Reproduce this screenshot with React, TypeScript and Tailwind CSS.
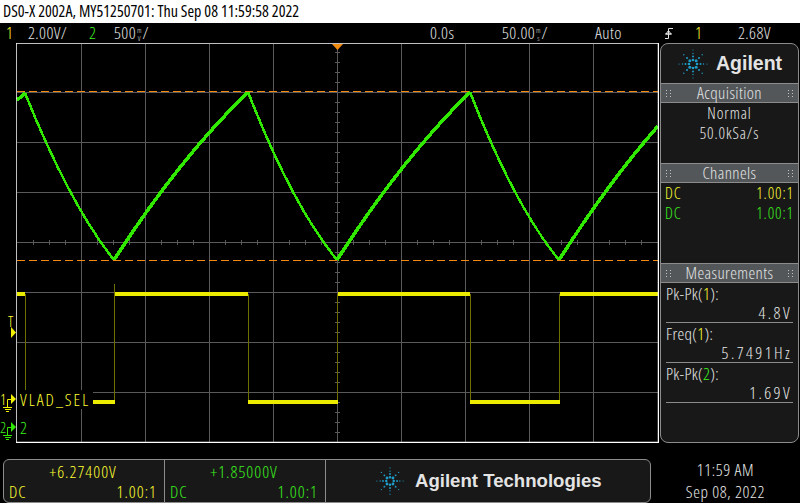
const hLines = [92, 142, 192, 242, 292, 342, 392]
const vLines = [81, 145, 209, 273, 337, 401, 465, 529, 593]

const xTicks = Array.from({ length: 39 }, (_, i) => 33 + i * 16)
const yTicks = Array.from({ length: 39 }, (_, i) => 52 + i * 10)

const sparkArms = [0, 45, 90, 135, 180, 225, 270, 315]

const Spark = ({ size = 32 }: { size?: number }) => (
  <svg width={size} height={size} viewBox="-16 -16 32 32" className="shrink-0">
    {sparkArms.map((deg) => {
      const straight = deg % 90 === 0
      const rad = (deg * Math.PI) / 180
      const dots = straight
        ? [[4, 1.3], [7.5, 1], [10.5, 0.7], [14, 0.6]]
        : [[4.5, 1.5], [8.5, 1], [13, 0.7]]
      return dots.map(([r, s]) => (
        <circle
          key={`${deg}-${r}`}
          cx={Math.cos(rad) * r}
          cy={Math.sin(rad) * r}
          r={s}
          fill="#1e9cc8"
        />
      ))
    })}
  </svg>
)

const Unit = ({ top, bottom }: { top: string; bottom: string }) => (
  <span className="inline-flex flex-col items-center text-[7px] leading-[8px] align-middle mx-[1px] tracking-normal">
    <span>{top}</span>
    <span>{bottom}</span>
  </span>
)

const Grip = () => (
  <svg width="5" height="9" viewBox="0 0 5 9" className="shrink-0">
    {[0, 4].map((x) =>
      [0, 3, 6].map((y) => <rect key={`${x}-${y}`} x={x} y={y + 1} width="1" height="1" fill="#c4c4c4" />)
    )}
  </svg>
)

const PanelHeader = ({ title }: { title: string }) => (
  <div className="flex items-center justify-between h-[20px] px-[5px] bg-[#53575a] border-y border-[#8c8c8c] text-[#e4e4e4] text-[17px] leading-[18px] tracking-[0.4px]">
    <Grip />
    <span className="-mt-[1px]">{title}</span>
    <Grip />
  </div>
)

const Measurement = ({ name, ch, chClass, value }: { name: string; ch: string; chClass: string; value: string }) => (
  <div className="h-[40px] mx-[5px] border-b border-[#8c8c8c] text-[#e8e8e8] text-[17px] tracking-[0.3px] leading-[19px]">
    <div className="pt-[1px]">
      {name}(<span className={chClass}>{ch}</span>):
    </div>
    <div className="text-right pr-[1px] tracking-[2.4px]">{value}</div>
  </div>
)

const Readout = ({ value, color, width }: { value: string; color: string; width: string }) => (
  <div className={`${width} h-full border-r border-[#8c8c8c] px-[5px] ${color} text-[17px] tracking-[1px]`}>
    <div className="text-center leading-[20px] pt-[2px] pr-[2px]">{value}</div>
    <div className="flex justify-between leading-[19px] pr-[2px]">
      <span>DC</span>
      <span>1.00:1</span>
    </div>
  </div>
)

const ChannelMark = ({ label, color, textClass, y }: { label: string; color: string; textClass: string; y: string }) => (
  <div className={`absolute left-[-16px] ${y} w-[17px] h-[19px]`}>
    <span className={`absolute left-[0px] top-[-3px] ${textClass} text-[15px] leading-[16px]`}>{label}</span>
    <svg width="17" height="19" viewBox="0 0 17 19" className="block">
      <path d="M11 0l5 5-5 5z" fill={color} />
      <path d="M11 5.5H7.5V13M3 13.5h9M5 15.5h6M6 17.5h3" fill="none" stroke={color} />
    </svg>
  </div>
)

export default function App() {
  return (
    <div className="w-[800px] h-[503px] bg-black flex flex-col overflow-hidden font-['Open_Sans',sans-serif] font-stretch-[75%] font-[350]">
      <div className="h-[23px] bg-white text-black text-[16px] font-normal leading-[23px] px-[3px] whitespace-nowrap">
        DS0-X 2002A, MY51250701: Thu Sep 08 11:59:58 2022
      </div>

      <div className="h-[20px] flex items-center text-[#e4e4e4] text-[17px] tracking-[0.4px] whitespace-nowrap">
        <span className="ml-[6px] w-[22px] text-[#ffff30]">1</span>
        <span className="w-[61px]">2.00V/</span>
        <span className="w-[25px] text-[#3cf01e]">2</span>
        <span className="w-[316px]">500<Unit top="m" bottom="V" />/</span>
        <span className="w-[72px]">0.0s</span>
        <span className="w-[93px]">50.00<Unit top="m" bottom="s" />/</span>
        <span className="w-[70px]">Auto</span>
        <svg width="8" height="11" viewBox="0 0 8 11" className="shrink-0">
          <path d="M0 10.5h3.5V.5H8M0 6h7M3.5 2.5 1 6h5z" fill="none" stroke="#e4e4e4" />
        </svg>
        <span className="ml-[22px] w-[43px] text-[#ffff30]">1</span>
        <span>2.68V</span>
      </div>

      <div className="flex h-[400px]">
        <div className="w-[660px] shrink-0 pl-[16px]">
          <div className="relative w-[643px] h-[400px]">
            <svg width="643" height="400" viewBox="16 43 643 400" className="block">
              {hLines.map((y) => (
                <line key={y} x1="17" x2="658" y1={y + 0.5} y2={y + 0.5} stroke="#5a5a5a" />
              ))}
              {vLines.map((x) => (
                <line key={x} x1={x + 0.5} x2={x + 0.5} y1="44" y2="442" stroke="#5a5a5a" />
              ))}
              {xTicks.map((x) => (
                <line key={x} x1={x + 0.5} x2={x + 0.5} y1="240" y2="245" stroke="#5a5a5a" />
              ))}
              {yTicks.map((y) => (
                <line key={y} x1="335" x2="340" y1={y + 0.5} y2={y + 0.5} stroke="#5a5a5a" />
              ))}

              <g stroke="#6f6f00" fill="none">
                <path d="M25.5 294V390M114.5 284V402M248.5 294V402M337.5 294V402M470.5 294V402M559.5 294V402" />
              </g>
              <g stroke="#ecec00" strokeWidth="4" fill="none">
                <path d="M17 294H25M115 294H248M338 294H470M560 294H658" />
                <path d="M93 402H115M248 402H338M470 402H560" />
              </g>

              <g fill="none" stroke="#30e800" strokeLinejoin="round" shapeRendering="crispEdges">
                <path d="M17 100Q21 97 25 93" strokeWidth="3.5" />
                <path d="M25 93Q70 205 114 260" strokeWidth="2.5" />
                <path d="M114 260Q178 160 248 92" strokeWidth="3.5" />
                <path d="M248 92Q292 205 337 260" strokeWidth="2.5" />
                <path d="M337 260Q401 160 470 92" strokeWidth="3.5" />
                <path d="M470 92Q514 205 559 260" strokeWidth="2.5" />
                <path d="M559 260Q608 183 658 126" strokeWidth="3.5" />
              </g>

              <line x1="17" x2="658" y1="91.5" y2="91.5" stroke="#f08a10" strokeDasharray="8 4" />
              <line x1="17" x2="658" y1="260.5" y2="260.5" stroke="#f08a10" strokeDasharray="8 4" />

              <path d="M332 44h11l-5.5 6z" fill="#f08a10" />
              <rect x="16" y="43" width="642.5" height="399.5" fill="none" stroke="#ffffff" strokeWidth="1.5" />
            </svg>

            <span className="absolute left-[-8px] top-[270px] text-[#ffff30] text-[15px] leading-[16px]">T</span>
            <svg width="6" height="11" viewBox="0 0 6 11" className="absolute left-[-5px] top-[284px]">
              <path d="M0 0l5 5.5-5 5.5z" fill="#f0f000" />
            </svg>

            <div className="absolute left-[1px] top-[347px] w-[76px] h-[19px] bg-black pl-[3px] text-[#ffff30] text-[17px] tracking-[2px] leading-[19px] whitespace-nowrap">
              VLAD_SEL
            </div>
            <ChannelMark label="1" color="#f0f000" textClass="text-[#ffff30]" y="top-[351px]" />
            <div className="absolute left-[4px] top-[375px] text-[#3cf01e] text-[17px] leading-[19px]">2</div>
            <ChannelMark label="2" color="#30e800" textClass="text-[#3cf01e]" y="top-[379px]" />
          </div>
        </div>

        <div className="w-[139px] h-[400px] flex flex-col border border-[#8c8c8c] rounded-[8px] overflow-hidden bg-[#181818]">
          <div className="h-[39px] flex items-center pl-[16px] gap-[7px]">
            <Spark />
            <span className="font-['Liberation_Sans',sans-serif] font-bold text-[#e4e4e4] text-[19.5px]">Agilent</span>
          </div>

          <PanelHeader title="Acquisition" />
          <div className="h-[60px] text-center text-[#e8e8e8] text-[16px] tracking-[0.9px] leading-[20px]">
            <div>Normal</div>
            <div>50.0kSa/s</div>
          </div>

          <PanelHeader title="Channels" />
          <div className="h-[80px] px-[4px] text-[16px] tracking-[0.9px] leading-[20px]">
            <div className="flex justify-between text-[#ffff30]">
              <span>DC</span>
              <span>1.00:1</span>
            </div>
            <div className="flex justify-between text-[#3cf01e]">
              <span>DC</span>
              <span>1.00:1</span>
            </div>
          </div>

          <PanelHeader title="Measurements" />
          <Measurement name="Pk-Pk" ch="1" chClass="text-[#ffff30]" value="4.8V" />
          <Measurement name="Freq" ch="1" chClass="text-[#ffff30]" value="5.7491Hz" />
          <Measurement name="Pk-Pk" ch="2" chClass="text-[#3cf01e]" value="1.69V" />
        </div>
      </div>

      <div className="flex mt-[16px] pl-[3px] h-[44px]">
        <div className="w-[648px] h-full flex border border-[#8c8c8c] rounded-[6px] overflow-hidden bg-[#181818]">
          <Readout value="+6.27400V" color="text-[#ffff30]" width="w-[161px]" />
          <Readout value="+1.85000V" color="text-[#3cf01e]" width="w-[161px]" />
          <div className="flex-1 flex items-center pl-[49px] gap-[10px]">
            <Spark size={30} />
            <span className="font-['Liberation_Sans',sans-serif] font-bold text-[#e4e4e4] text-[18.6px] whitespace-nowrap">
              Agilent Technologies
            </span>
          </div>
        </div>
        <div className="flex-1 text-center text-[#e8e8e8] text-[17px] tracking-[0.6px] leading-[22px]">
          <div>11:59 AM</div>
          <div>Sep 08, 2022</div>
        </div>
      </div>
    </div>
  )
}
